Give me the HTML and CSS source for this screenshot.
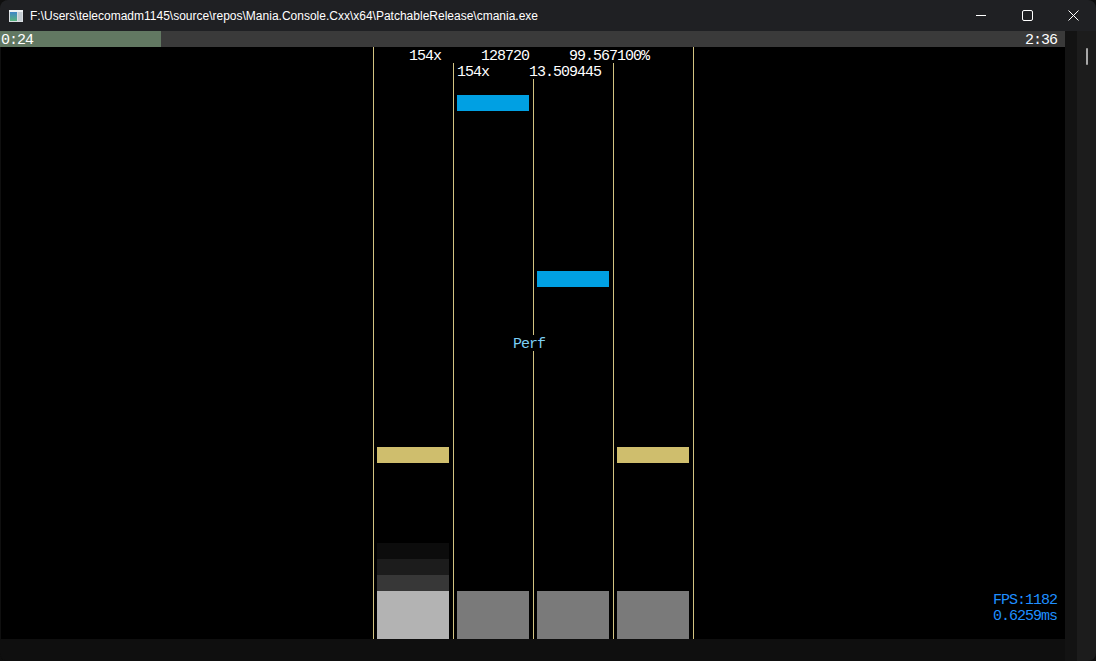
FILE: index.html
```html
<!DOCTYPE html>
<html>
<head>
<meta charset="utf-8">
<link rel="stylesheet" href="styles.css">
</head>
<body>
<div class="window">
  <div class="titlebar">
    <svg class="appicon" width="14" height="12" viewBox="0 0 14 12">
      <defs>
        <linearGradient id="g" x1="0" y1="0" x2="0" y2="1">
          <stop offset="0" stop-color="#3f86c8"/>
          <stop offset="1" stop-color="#58b27c"/>
        </linearGradient>
      </defs>
      <rect x="0" y="0" width="14" height="12" fill="#d9dee2"/>
      <rect x="0" y="0" width="14" height="2" fill="#eef2f4"/>
      <rect x="1" y="2" width="7" height="9" fill="url(#g)"/>
      <rect x="9" y="2" width="4" height="9" fill="#c4ccd2"/>
    </svg>
    <div class="title">F:\Users\telecomadm1145\source\repos\Mania.Console.Cxx\x64\PatchableRelease\cmania.exe</div>
    <div class="controls">
      <div class="ctl"><span class="min"></span></div>
      <div class="ctl"><span class="max"></span></div>
      <div class="ctl">
        <svg width="11" height="11" viewBox="0 0 11 11"><path d="M0.5 0.5 L10.5 10.5 M10.5 0.5 L0.5 10.5" stroke="#ffffff" stroke-width="1"/></svg>
      </div>
    </div>
  </div>
  <div class="body">
    <div class="left">
      <div class="console">
        <div class="prog-done"></div>
        <div class="prog-rest"></div>
        <div class="txt t-time">0:24</div>
        <div class="txt t-total">2:36</div>

        <div class="vline l1"></div>
        <div class="vline l2"></div>
        <div class="vline l3a"></div>
        <div class="vline l3b"></div>
        <div class="vline l4"></div>
        <div class="vline l5"></div>

        <div class="txt t-combo">154x</div>
        <div class="txt t-score">128720</div>
        <div class="txt t-acc">99.567100%</div>
        <div class="txt t-combo2">154x</div>
        <div class="txt t-pp">13.509445</div>

        <div class="note blue n1"></div>
        <div class="note blue n2"></div>
        <div class="txt t-perf">Perf</div>
        <div class="note gold n3"></div>
        <div class="note gold n4"></div>

        <div class="fade f1"></div>
        <div class="fade f2"></div>
        <div class="fade f3"></div>
        <div class="key k1"></div>
        <div class="key k2"></div>
        <div class="key k3"></div>
        <div class="key k4"></div>

        <div class="txt t-fps">FPS:1182</div>
        <div class="txt t-ms">0.6259ms</div>
      </div>
      <div class="hpad"></div>
    </div>
    <div class="vpad"></div>
    <div class="scrollbar"><div class="thumb"></div></div>
  </div>
</div>
</body>
</html>
```

FILE: styles.css
```css
html, body {
  margin: 0;
  padding: 0;
  background: #0f0f0f;
}
.window {
  width: 1096px;
  height: 661px;
  display: flex;
  flex-direction: column;
  background: #0f0f0f;
  overflow: hidden;
  border-radius: 8px 8px 8px 8px;
}
.titlebar {
  height: 31px;
  flex: none;
  display: flex;
  align-items: center;
  background: #1f2023;
}
.appicon {
  margin-left: 9px;
  margin-top: 1px;
  flex: none;
}
.title {
  margin-left: 7px;
  font-family: "Liberation Sans", Arial, sans-serif;
  font-size: 12px;
  color: #ffffff;
  white-space: nowrap;
  flex: 1;
}
.controls {
  display: flex;
  height: 31px;
}
.ctl {
  width: 46px;
  height: 31px;
  display: flex;
  align-items: center;
  justify-content: center;
}
.min {
  width: 10px;
  height: 1px;
  background: #ffffff;
}
.max {
  width: 9px;
  height: 9px;
  border: 1px solid #ffffff;
  border-radius: 2px;
}
.body {
  flex: 1;
  display: flex;
}
.left {
  width: 1064px;
  padding-left: 1px;
  display: flex;
  flex-direction: column;
  background: #0f0f0f;
}
.console {
  display: grid;
  grid-template-columns: repeat(133, 8px);
  grid-template-rows: repeat(38, 16px);
  background: #000000;
  font-family: "Liberation Mono", monospace;
  font-size: 15px;
  letter-spacing: -1px;
  line-height: 16px;
  color: #ffffff;
}
.hpad {
  flex: 1;
  background: #0f0f0f;
}
.vpad {
  width: 12px;
  background: #131313;
}
.scrollbar {
  flex: 1;
  background: #1c1c1c;
  position: relative;
}
.thumb {
  position: absolute;
  left: 9px;
  top: 17px;
  width: 2px;
  height: 17px;
  background: #a8a8a8;
  border-radius: 1px;
}
.txt {
  white-space: pre;
  grid-row: 1;
  z-index: 2;
  padding-top: 2px;
}
.prog-done {
  grid-row: 1;
  grid-column: 1 / 21;
  background: #627862;
  margin-left: -1px;
}
.prog-rest {
  grid-row: 1;
  grid-column: 21 / 134;
  background: #3a3a3a;
}
.t-time { grid-column: 1 / span 4; }
.t-total { grid-column: 129 / span 4; }

.vline {
  width: 1px;
  margin-left: 4px;
  background: #d2c382;
}
.l1 { grid-column: 47; grid-row: 2 / 39; }
.l2 { grid-column: 57; grid-row: 3 / 39; }
.l3a { grid-column: 67; grid-row: 4 / 20; }
.l3b { grid-column: 67; grid-row: 21 / 39; }
.l4 { grid-column: 77; grid-row: 3 / 39; }
.l5 { grid-column: 87; grid-row: 2 / 39; }

.t-combo { grid-row: 2; grid-column: 52 / span 4; }
.t-score { grid-row: 2; grid-column: 61 / span 6; }
.t-acc { grid-row: 2; grid-column: 72 / span 10; }
.t-combo2 { grid-row: 3; grid-column: 58 / span 4; }
.t-pp { grid-row: 3; grid-column: 67 / span 9; }

.blue { background: #00a0e3; }
.gold { background: #cfbe6d; }
.n1 { grid-row: 5; grid-column: 58 / 67; }
.n2 { grid-row: 16; grid-column: 68 / 77; }
.n3 { grid-row: 27; grid-column: 48 / 57; }
.n4 { grid-row: 27; grid-column: 78 / 87; }

.t-perf {
  grid-row: 20;
  grid-column: 65 / span 4;
  color: #7ccff5;
}

.fade { grid-column: 48 / 57; }
.f1 { grid-row: 33; background: #0c0c0c; }
.f2 { grid-row: 34; background: #1c1c1c; }
.f3 { grid-row: 35; background: #373737; }
.key { grid-row: 36 / 39; background: #7a7a7a; }
.k1 { grid-column: 48 / 57; background: #b3b3b3; }
.k2 { grid-column: 58 / 67; }
.k3 { grid-column: 68 / 77; }
.k4 { grid-column: 78 / 87; }

.t-fps { grid-row: 36; grid-column: 125 / span 8; color: #1f8fff; }
.t-ms { grid-row: 37; grid-column: 125 / span 8; color: #1f8fff; }
```
